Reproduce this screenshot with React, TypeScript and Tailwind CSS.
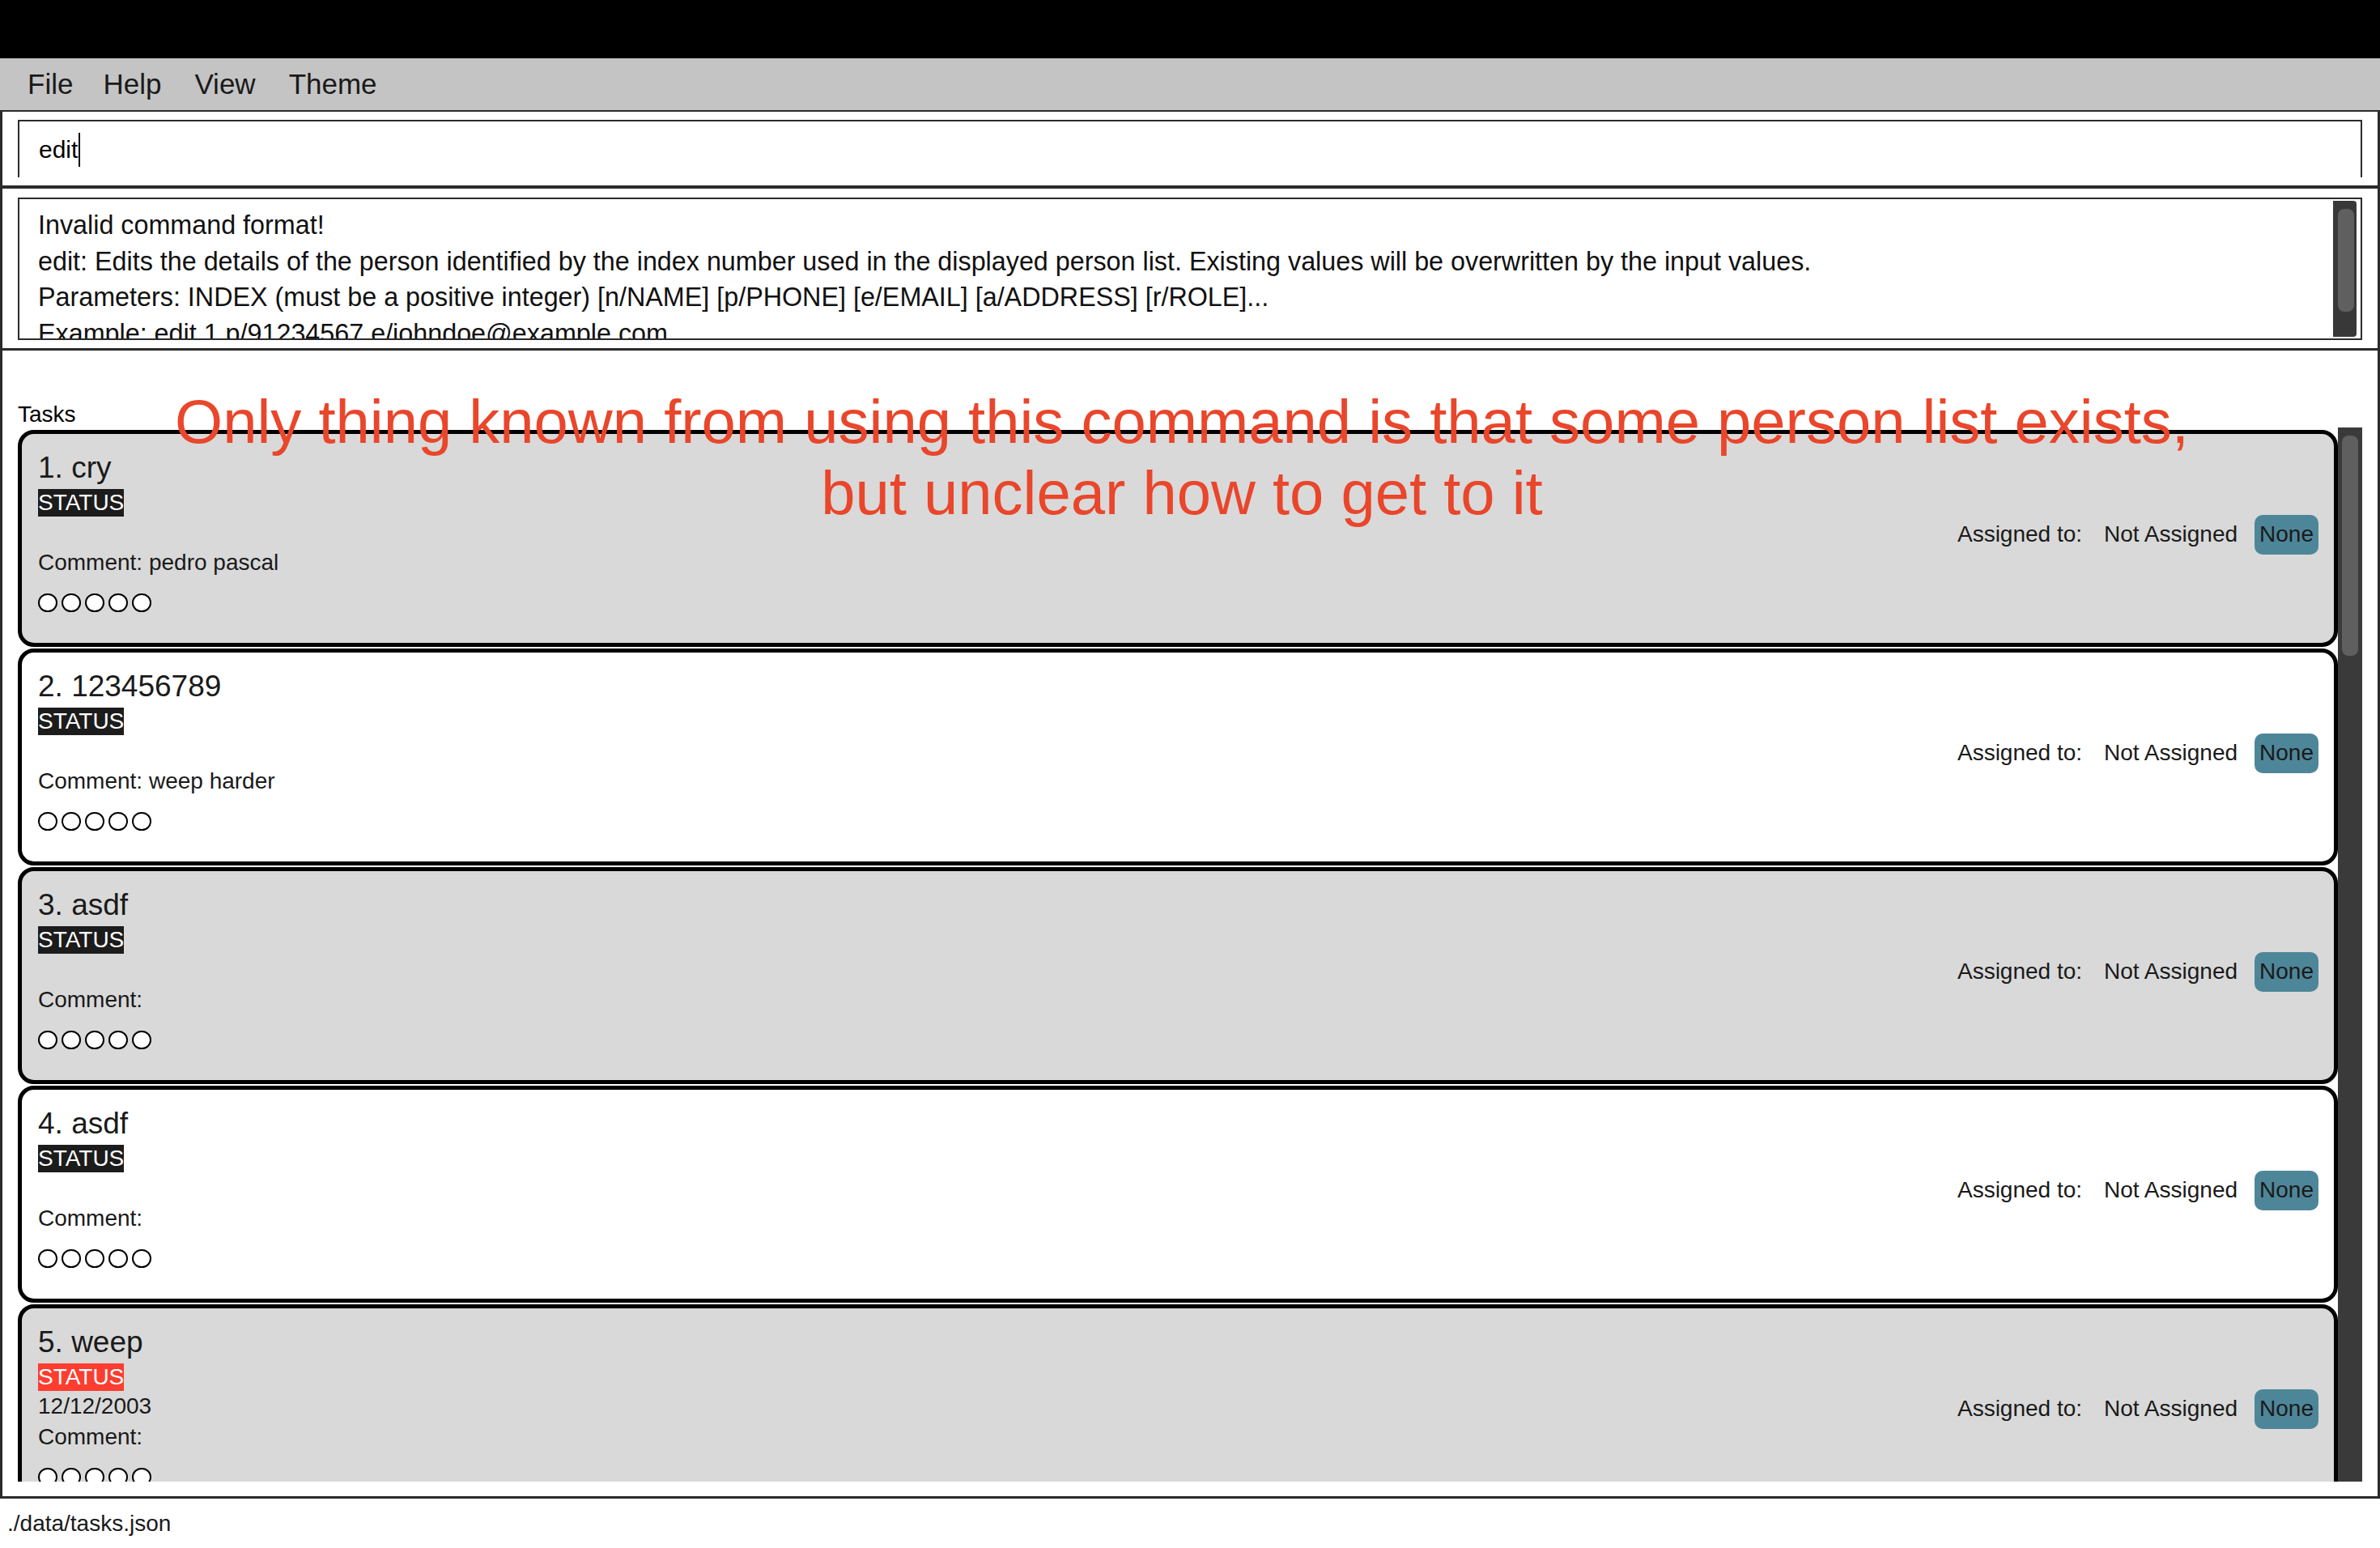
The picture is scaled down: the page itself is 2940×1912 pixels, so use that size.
import React from "react";

type Task = {
  id: number;
  title: string;
  statusColor: "dark" | "red";
  date: string;
  comment: string;
};

const tasks: Task[] = [
  { id: 1, title: "cry", statusColor: "dark", date: "", comment: "pedro pascal" },
  { id: 2, title: "123456789", statusColor: "dark", date: "", comment: "weep harder" },
  { id: 3, title: "asdf", statusColor: "dark", date: "", comment: "" },
  { id: 4, title: "asdf", statusColor: "dark", date: "", comment: "" },
  { id: 5, title: "weep", statusColor: "red", date: "12/12/2003", comment: "" },
];

const resultLines = [
  "Invalid command format!",
  "edit: Edits the details of the person identified by the index number used in the displayed person list. Existing values will be overwritten by the input values.",
  "Parameters: INDEX (must be a positive integer) [n/NAME] [p/PHONE] [e/EMAIL] [a/ADDRESS] [r/ROLE]...",
  "Example: edit 1 p/91234567 e/johndoe@example.com",
];

function Rating() {
  return (
    <div className="mt-[19px] flex gap-[5px]">
      {Array.from({ length: 5 }).map((_, i) => (
        <div key={i} className="h-[23px] w-[24px] rounded-full border-2 border-black bg-white" />
      ))}
    </div>
  );
}

function TaskCard({ task, index }: { task: Task; index: number }) {
  const shaded = index % 2 === 0;
  return (
    <div
      className={`flex h-[268px] shrink-0 rounded-[20px] border-[5px] border-black pl-[20px] pr-[19px] pt-[20px] ${
        shaded ? "bg-[#d9d9d9]" : "bg-white"
      }`}
    >
      <div className="flex flex-col items-start">
        <div className="text-[37px] leading-[44px] text-[#1a1a1a]">
          {task.id}. {task.title}
        </div>
        <div
          className={`mt-[4px] h-[34px] text-[28px] leading-[34px] text-white ${
            task.statusColor === "red" ? "bg-[#fc3d2f]" : "bg-[#1c1c1c]"
          }`}
        >
          STATUS
        </div>
        <div className="h-[38px] text-[28px] leading-[38px] text-[#1a1a1a]">{task.date}</div>
        <div className="h-[38px] text-[28px] leading-[38px] text-[#1a1a1a]">
          Comment: {task.comment}
        </div>
        <Rating />
      </div>
      <div className="mb-[30px] ml-auto flex items-center self-center text-[28px] text-[#1a1a1a]">
        <span>Assigned to:</span>
        <span className="ml-[27px]">Not Assigned</span>
        <span className="ml-[21px] flex h-[49px] items-center rounded-[10px] bg-[#4e8699] px-[6px]">
          None
        </span>
      </div>
    </div>
  );
}

export default function App() {
  return (
    <div className="relative h-[1912px] w-[2940px] overflow-hidden bg-white font-['Liberation_Sans',Arial,sans-serif] text-black">
      {/* window title strip */}
      <div className="h-[72px] bg-black" />

      {/* menu bar */}
      <div className="flex h-[64px] items-center bg-[#c4c4c4] pl-[34px] text-[35px] text-[#1a1a1a]">
        <span>File</span>
        <span className="ml-[37px]">Help</span>
        <span className="ml-[41px]">View</span>
        <span className="ml-[41px]">Theme</span>
      </div>

      <div className="flex h-[1715px] flex-col border-x-[3px] border-t-[2px] border-b-[3px] border-[#2b2b2b]">
        {/* command box */}
        <div className="h-[91px] px-[19px] pt-[10px]">
          <div className="flex h-[71px] items-center border-x-2 border-t-2 border-[#2b2b2b] pl-[24px] text-[30px]">
            <span>edit</span>
            <span className="ml-[1px] h-[42px] w-[2px] bg-black" />
          </div>
        </div>

        {/* result display */}
        <div className="h-[201px] border-t-[4px] border-[#2b2b2b] px-[19px] pt-[11px]">
          <div className="flex h-[176px] border-2 border-[#2b2b2b]">
            <div className="flex-1 overflow-hidden pl-[23px] pt-[10px] text-[32.3px] leading-[44.5px] text-[#111]">
              {resultLines.map((line) => (
                <div key={line} className="whitespace-nowrap">
                  {line}
                </div>
              ))}
            </div>
            <div className="my-[2px] mr-[5px] w-[29px] rounded-r-[4px] bg-[#383838] pt-[10px]">
              <div className="ml-[6px] h-[127px] w-[20px] rounded-[8px] bg-[#5f5f5f]" />
            </div>
          </div>
        </div>

        {/* task list */}
        <div className="flex flex-1 flex-col border-t-[3px] border-[#2b2b2b] px-[19px] pb-[18px] pt-[63px]">
          <div className="h-[32px] text-[28px] leading-[32px]">Tasks</div>
          <div className="flex h-[1302px] overflow-hidden">
            <div className="flex flex-1 flex-col gap-[2px] overflow-hidden pt-[3px]">
              {tasks.map((t, i) => (
                <TaskCard key={t.id} task={t} index={i} />
              ))}
            </div>
            <div className="w-[30px] bg-[#3a3a3a] pt-[10px]">
              <div className="ml-[5px] h-[272px] w-[20px] rounded-[8px] bg-[#5f5f5f]" />
            </div>
          </div>
        </div>
      </div>

      {/* status bar */}
      <div className="flex h-[61px] items-center pl-[9px] text-[28px] text-[#1a1a1a]">./data/tasks.json</div>

      {/* annotation */}
      <div className="pointer-events-none absolute left-0 top-[477px] w-[2920px] text-center text-[76px] leading-[88px] text-[#e9462b]">
        <div>Only thing known from using this command is that some person list exists,</div>
        <div>but unclear how to get to it</div>
      </div>
    </div>
  );
}
